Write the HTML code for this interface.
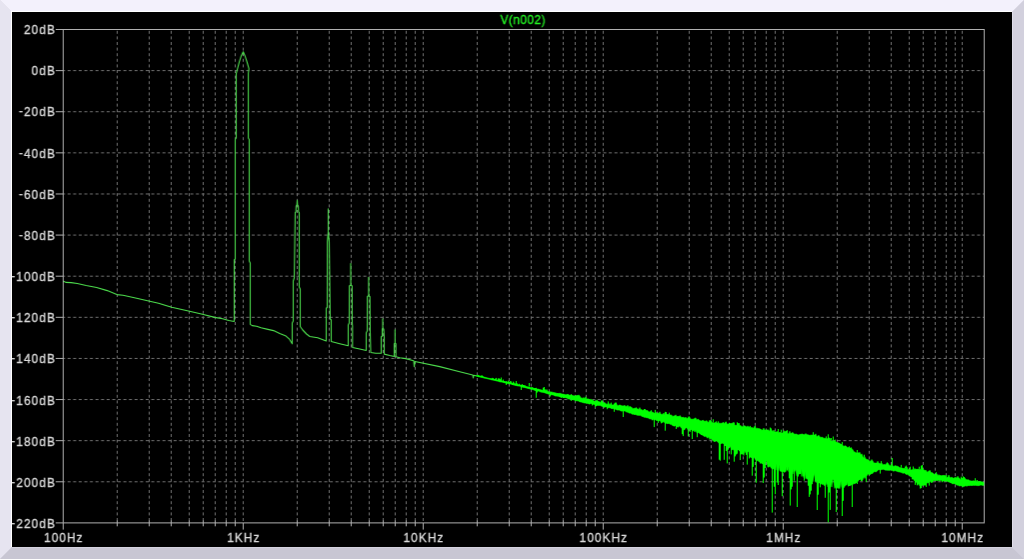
<!DOCTYPE html><html><head><meta charset="utf-8"><style>html,body{margin:0;padding:0;background:#000;width:1024px;height:559px;overflow:hidden}#w{position:absolute;left:0;top:0;width:1024px;height:559px}</style></head><body><div id="w"><svg width="1024" height="559" viewBox="0 0 1024 559" style="position:absolute;left:0;top:0;display:block;will-change:transform"><rect x="0" y="0" width="1024" height="559" fill="#DCDAE6"/><polygon points="0,0 1024,0 1012,12 12,12" fill="#F3F1FC"/><polygon points="0,0 12,12 12,547 0,559" fill="#E6E4F0"/><polygon points="1024,0 1024,559 1012,547 1012,12" fill="#D2D0DD"/><polygon points="0,559 12,547 1012,547 1024,559" fill="#C8C6D3"/><rect x="11" y="11" width="1001" height="1" fill="#FFFFFF"/><rect x="11" y="11" width="1" height="536" fill="#FFFFFF"/><rect x="1012" y="12" width="1" height="536" fill="#DEDCE8"/><rect x="12" y="547" width="1001" height="1" fill="#D4D2DE"/><defs><filter id="hb" x="12" y="12" width="1000" height="535" filterUnits="userSpaceOnUse" color-interpolation-filters="sRGB"><feConvolveMatrix order="3 1" kernelMatrix="0.3 0.75 0" divisor="1" preserveAlpha="true"/></filter></defs><g filter="url(#hb)"><rect x="12" y="12" width="1000" height="535" fill="#000000"/><path d="M64 70.62H984 M64 111.73H984 M64 152.85H984 M64 193.97H984 M64 235.08H984 M64 276.20H984 M64 317.32H984 M64 358.44H984 M64 399.55H984 M64 440.67H984 M64 481.79H984" stroke="#6C6C6C" stroke-width="1" stroke-dasharray="3 2.58" stroke-dashoffset="1.7" fill="none"/><path d="M117.5 30V523 M149.5 30V523 M171.5 30V523 M189.5 30V523 M203.5 30V523 M215.5 30V523 M226.5 30V523 M235.5 30V523 M243.5 30V523 M297.5 30V523 M329.5 30V523 M351.5 30V523 M369.5 30V523 M383.5 30V523 M395.5 30V523 M406.5 30V523 M415.5 30V523 M423.5 30V523 M477.5 30V523 M509.5 30V523 M531.5 30V523 M549.5 30V523 M563.5 30V523 M575.5 30V523 M586.5 30V523 M595.5 30V523 M603.5 30V523 M657.5 30V523 M689.5 30V523 M711.5 30V523 M729.5 30V523 M743.5 30V523 M755.5 30V523 M766.5 30V523 M775.5 30V523 M783.5 30V523 M837.5 30V523 M869.5 30V523 M891.5 30V523 M909.5 30V523 M923.5 30V523 M935.5 30V523 M946.5 30V523 M955.5 30V523 M962.5 30V523" stroke="#6C6C6C" stroke-width="1" stroke-dasharray="3 2.6" stroke-dashoffset="4.8" fill="none"/><path d="M56 29.50H63 M56 70.62H63 M56 111.73H63 M56 152.85H63 M56 193.97H63 M56 235.08H63 M56 276.20H63 M56 317.32H63 M56 358.44H63 M56 399.55H63 M56 440.67H63 M56 481.79H63 M56 522.90H63 M63.5 523V529.6 M117.5 520.3V526.3 M149.5 520.3V526.3 M171.5 520.3V526.3 M189.5 520.3V526.3 M203.5 520.3V526.3 M215.5 520.3V526.3 M226.5 520.3V526.3 M235.5 520.3V526.3 M243.5 523V529.6 M297.5 520.3V526.3 M329.5 520.3V526.3 M351.5 520.3V526.3 M369.5 520.3V526.3 M383.5 520.3V526.3 M395.5 520.3V526.3 M406.5 520.3V526.3 M415.5 520.3V526.3 M423.5 523V529.6 M477.5 520.3V526.3 M509.5 520.3V526.3 M531.5 520.3V526.3 M549.5 520.3V526.3 M563.5 520.3V526.3 M575.5 520.3V526.3 M586.5 520.3V526.3 M595.5 520.3V526.3 M603.5 523V529.6 M657.5 520.3V526.3 M689.5 520.3V526.3 M711.5 520.3V526.3 M729.5 520.3V526.3 M743.5 520.3V526.3 M755.5 520.3V526.3 M766.5 520.3V526.3 M775.5 520.3V526.3 M783.5 523V529.6 M837.5 520.3V526.3 M869.5 520.3V526.3 M891.5 520.3V526.3 M909.5 520.3V526.3 M923.5 520.3V526.3 M935.5 520.3V526.3 M946.5 520.3V526.3 M955.5 520.3V526.3 M962.5 523V529.6" stroke="#A8A8A8" stroke-width="1" fill="none"/><path d="M63.5 29V522.9M63 29.5H985M984.5 29V522.9M63 522.9H985" stroke="#A8A8A8" stroke-width="1" fill="none"/><g fill="#CFCFCF" stroke="#CFCFCF" stroke-width="0.35" font-family="Liberation Sans, sans-serif" font-size="13.4" letter-spacing="1.25"><text transform="translate(56.1,34.0) scale(0.88,1)" text-anchor="end">20dB</text><text transform="translate(56.1,75.0) scale(0.88,1)" text-anchor="end">0dB</text><text transform="translate(56.1,116.0) scale(0.88,1)" text-anchor="end"><tspan dy="-1.2">-</tspan><tspan dy="1.2">20dB</tspan></text><text transform="translate(56.1,158.0) scale(0.88,1)" text-anchor="end"><tspan dy="-1.2">-</tspan><tspan dy="1.2">40dB</tspan></text><text transform="translate(56.1,199.0) scale(0.88,1)" text-anchor="end"><tspan dy="-1.2">-</tspan><tspan dy="1.2">60dB</tspan></text><text transform="translate(56.1,240.0) scale(0.88,1)" text-anchor="end"><tspan dy="-1.2">-</tspan><tspan dy="1.2">80dB</tspan></text><text transform="translate(56.1,281.0) scale(0.88,1)" text-anchor="end"><tspan dy="-1.2">-</tspan><tspan dy="1.2">100dB</tspan></text><text transform="translate(56.1,322.0) scale(0.88,1)" text-anchor="end"><tspan dy="-1.2">-</tspan><tspan dy="1.2">120dB</tspan></text><text transform="translate(56.1,363.0) scale(0.88,1)" text-anchor="end"><tspan dy="-1.2">-</tspan><tspan dy="1.2">140dB</tspan></text><text transform="translate(56.1,405.0) scale(0.88,1)" text-anchor="end"><tspan dy="-1.2">-</tspan><tspan dy="1.2">160dB</tspan></text><text transform="translate(56.1,446.0) scale(0.88,1)" text-anchor="end"><tspan dy="-1.2">-</tspan><tspan dy="1.2">180dB</tspan></text><text transform="translate(56.1,487.0) scale(0.88,1)" text-anchor="end"><tspan dy="-1.2">-</tspan><tspan dy="1.2">200dB</tspan></text><text transform="translate(56.1,528.0) scale(0.88,1)" text-anchor="end"><tspan dy="-1.2">-</tspan><tspan dy="1.2">220dB</tspan></text><text transform="translate(64.05,542) scale(0.88,1)" text-anchor="middle">100Hz</text><text transform="translate(244.05,542) scale(0.88,1)" text-anchor="middle">1KHz</text><text transform="translate(424.05,542) scale(0.88,1)" text-anchor="middle">10KHz</text><text transform="translate(604.05,542) scale(0.88,1)" text-anchor="middle">100KHz</text><text transform="translate(784.05,542) scale(0.88,1)" text-anchor="middle">1MHz</text><text transform="translate(963.05,542) scale(0.88,1)" text-anchor="middle">10MHz</text></g><text transform="translate(523.3,24) scale(0.88,1)" text-anchor="middle" fill="#22E822" stroke="#22E822" stroke-width="0.35" font-family="Liberation Sans, sans-serif" font-size="13.4" letter-spacing="0.57">V(n002)</text><path d="M64.0 281.2 L66.0 282.4 L71.4 282.6 L77.6 283.5 L86.4 285.5 L96.9 287.5 L107.5 290.6 L117.1 294.6 L123.3 295.2 L134.7 297.7 L150.0 301.2 L158.8 303.3 L172.0 307.3 L188.7 311.0 L202.7 314.3 L215.0 317.4 L222.9 318.7 L229.1 320.5 L234.5 321.5 L234.5 260.0 L235.5 259.0 L235.5 139.5 L236.5 138.0 L236.5 73.6 L239.5 62.2 L241.6 55.7 L243.5 51.8 L245.2 55.7 L247.3 62.0 L249.2 68.6 L248.6 73.5 L248.6 138.0 L249.5 139.5 L249.5 261.0 L250.5 263.0 L250.5 324.4 L252.5 325.6 L256.9 326.3 L261.3 327.8 L268.2 329.4 L273.8 330.6 L280.0 333.5 L285.7 335.7 L289.4 338.8 L292.5 343.8 L292.5 323.0 L293.5 321.0 L293.5 281.0 L294.5 278.0 L295.5 212.5 L296.2 211.8 L296.4 206.0 L297.2 204.8 L297.5 200.4 L297.8 204.8 L298.6 206.0 L298.8 211.8 L299.5 212.5 L299.5 287.0 L300.5 289.0 L300.5 326.5 L303.0 330.0 L306.8 334.0 L310.0 336.5 L318.0 337.7 L326.5 341.0 L326.5 308.2 L327.5 307.5 L327.6 242.0 L328.5 232.0 L328.5 208.9 L328.5 232.0 L329.5 242.0 L330.5 319.0 L331.5 320.0 L331.5 341.5 L340.0 343.7 L348.5 345.8 L348.5 325.0 L349.5 323.0 L349.6 286.0 L351.0 285.0 L351.0 263.5 L351.1 285.0 L352.4 286.0 L352.5 323.0 L352.8 326.0 L352.8 347.5 L360.0 349.0 L366.5 350.5 L366.5 332.8 L367.5 331.0 L367.6 296.6 L368.9 295.5 L368.9 277.3 L369.0 295.5 L370.2 296.6 L370.5 333.0 L371.0 352.5 L376.0 353.2 L381.5 353.2 L381.5 337.0 L382.5 336.0 L382.5 329.0 L383.0 328.0 L383.0 318.7 L383.1 328.0 L384.0 329.0 L384.5 337.0 L384.5 354.1 L390.0 355.5 L394.5 356.5 L394.5 343.8 L395.3 343.0 L395.3 329.9 L395.4 343.0 L396.2 343.8 L396.2 356.8 L400.0 357.8 L406.0 358.6 L414.0 360.8 L414.5 366.6 L415.2 361.5 L440.0 366.6 L460.0 371.8 L473.0 375.0 L473.5 378.0 L474.0 375.2 L476.0 375.8" stroke="#48D048" stroke-width="1.1" fill="none" stroke-linejoin="round"/><path d="M476.0 375.4 L477.0 375.5 L478.0 375.7 L479.0 375.8 L480.0 375.8 L481.0 376.6 L482.0 375.3 L483.0 376.3 L484.0 377.0 L485.0 377.3 L486.0 377.4 L487.0 377.8 L488.0 378.0 L489.0 378.3 L490.0 378.4 L491.0 378.6 L492.0 378.8 L493.0 377.9 L494.0 379.3 L495.0 379.6 L496.0 379.7 L497.0 379.9 L498.0 380.2 L499.0 380.5 L500.0 379.7 L501.0 379.5 L502.0 380.9 L503.0 381.1 L504.0 381.6 L505.0 381.6 L506.0 382.0 L507.0 382.0 L508.0 382.3 L509.0 382.4 L510.0 382.8 L511.0 383.0 L512.0 383.1 L513.0 383.6 L514.0 382.5 L515.0 383.7 L516.0 383.9 L517.0 384.2 L518.0 384.7 L519.0 384.7 L520.0 384.8 L521.0 385.2 L522.0 385.3 L523.0 385.8 L524.0 386.1 L525.0 385.1 L526.0 386.6 L527.0 386.5 L528.0 386.9 L529.0 386.9 L530.0 387.5 L531.0 387.7 L532.0 387.4 L533.0 387.8 L534.0 388.2 L535.0 388.7 L536.0 388.5 L537.0 389.0 L538.0 389.1 L539.0 389.1 L540.0 389.8 L541.0 389.6 L542.0 390.3 L543.0 390.2 L544.0 389.9 L545.0 389.1 L546.0 391.1 L547.0 389.4 L548.0 391.4 L549.0 391.9 L550.0 391.7 L551.0 392.1 L552.0 391.9 L553.0 392.4 L554.0 392.5 L555.0 392.8 L556.0 392.9 L557.0 393.4 L558.0 393.5 L559.0 393.5 L560.0 393.2 L561.0 393.6 L562.0 394.0 L563.0 394.1 L564.0 394.3 L565.0 394.5 L566.0 394.9 L567.0 394.6 L568.0 394.3 L569.0 394.7 L570.0 395.6 L571.0 395.1 L572.0 395.3 L573.0 395.5 L574.0 396.0 L575.0 395.8 L576.0 396.2 L577.0 395.1 L578.0 396.1 L579.0 394.8 L580.0 396.0 L581.0 397.7 L582.0 398.2 L583.0 398.4 L584.0 397.5 L585.0 399.0 L586.0 396.7 L587.0 399.0 L588.0 399.2 L589.0 398.8 L590.0 400.0 L591.0 398.9 L592.0 400.2 L593.0 400.0 L594.0 401.1 L595.0 401.5 L596.0 401.4 L597.0 399.8 L598.0 401.2 L599.0 401.7 L600.0 401.8 L601.0 403.0 L602.0 402.5 L603.0 403.0 L604.0 402.7 L605.0 402.5 L606.0 403.8 L607.0 404.4 L608.0 403.9 L609.0 404.9 L610.0 403.5 L611.0 405.2 L612.0 405.2 L613.0 404.7 L614.0 405.3 L615.0 403.5 L616.0 405.4 L617.0 404.4 L618.0 405.9 L619.0 405.6 L620.0 404.8 L621.0 405.6 L622.0 405.8 L623.0 406.0 L624.0 405.9 L625.0 405.2 L626.0 406.8 L627.0 406.6 L628.0 405.2 L629.0 407.9 L630.0 406.1 L631.0 407.3 L632.0 407.2 L633.0 409.1 L634.0 408.3 L635.0 408.4 L636.0 408.1 L637.0 408.6 L638.0 409.0 L639.0 409.7 L640.0 407.6 L641.0 410.1 L642.0 409.4 L643.0 410.7 L644.0 410.1 L645.0 410.1 L646.0 410.4 L647.0 410.5 L648.0 410.6 L649.0 412.2 L650.0 411.8 L651.0 411.6 L652.0 412.4 L653.0 411.9 L654.0 413.2 L655.0 413.2 L656.0 412.1 L657.0 413.9 L658.0 412.8 L659.0 414.1 L660.0 411.8 L661.0 414.3 L662.0 414.4 L663.0 414.4 L664.0 413.1 L665.0 414.9 L666.0 414.3 L667.0 414.1 L668.0 414.7 L669.0 414.4 L670.0 414.9 L671.0 415.0 L672.0 415.2 L673.0 416.7 L674.0 415.9 L675.0 416.0 L676.0 414.8 L677.0 416.9 L678.0 416.0 L679.0 417.0 L680.0 415.6 L681.0 416.4 L682.0 417.8 L683.0 417.3 L684.0 417.3 L685.0 418.3 L686.0 417.1 L687.0 418.8 L688.0 418.4 L689.0 416.4 L690.0 417.3 L691.0 419.5 L692.0 418.9 L693.0 419.5 L694.0 418.9 L695.0 418.6 L696.0 417.8 L697.0 420.4 L698.0 419.1 L699.0 419.6 L700.0 420.6 L701.0 421.0 L702.0 421.0 L703.0 420.1 L704.0 420.7 L705.0 421.6 L706.0 421.2 L707.0 420.6 L708.0 422.4 L709.0 422.4 L710.0 420.1 L711.0 420.9 L712.0 422.6 L713.0 422.8 L714.0 423.2 L715.0 422.7 L716.0 422.4 L717.0 422.9 L718.0 423.2 L719.0 423.4 L720.0 422.9 L721.0 423.7 L722.0 423.0 L723.0 423.2 L724.0 423.4 L725.0 423.4 L726.0 421.8 L727.0 423.4 L728.0 424.5 L729.0 423.8 L730.0 423.8 L731.0 423.2 L732.0 423.8 L733.0 422.9 L734.0 424.5 L735.0 425.2 L736.0 425.2 L737.0 425.6 L738.0 423.7 L739.0 423.4 L740.0 425.9 L741.0 425.4 L742.0 426.7 L743.0 426.9 L744.0 425.6 L745.0 426.1 L746.0 426.2 L747.0 427.6 L748.0 425.8 L749.0 427.5 L750.0 426.7 L751.0 428.3 L752.0 427.1 L753.0 428.5 L754.0 427.9 L755.0 426.3 L756.0 429.5 L757.0 427.7 L758.0 429.0 L759.0 428.3 L760.0 429.1 L761.0 429.0 L762.0 430.5 L763.0 430.1 L764.0 428.1 L765.0 430.4 L766.0 429.8 L767.0 430.3 L768.0 429.7 L769.0 430.2 L770.0 431.5 L771.0 430.2 L772.0 430.3 L773.0 431.8 L774.0 430.1 L775.0 432.3 L776.0 431.7 L777.0 432.2 L778.0 431.2 L779.0 433.1 L780.0 432.1 L781.0 432.8 L782.0 433.2 L783.0 433.1 L784.0 430.5 L785.0 432.2 L786.0 431.1 L787.0 431.3 L788.0 433.8 L789.0 434.0 L790.0 431.2 L791.0 434.1 L792.0 432.9 L793.0 432.4 L794.0 433.6 L795.0 434.6 L796.0 433.9 L797.0 434.2 L798.0 434.9 L799.0 434.9 L800.0 434.5 L801.0 434.3 L802.0 434.2 L803.0 433.9 L804.0 435.0 L805.0 434.5 L806.0 433.5 L807.0 434.8 L808.0 434.7 L809.0 435.1 L810.0 435.5 L811.0 435.0 L812.0 435.2 L813.0 435.1 L814.0 435.1 L815.0 435.3 L816.0 433.8 L817.0 437.2 L818.0 436.0 L819.0 435.2 L820.0 436.9 L821.0 437.4 L822.0 437.3 L823.0 437.3 L824.0 438.4 L825.0 438.2 L826.0 438.4 L827.0 438.4 L828.0 439.0 L829.0 439.7 L830.0 438.0 L831.0 440.9 L832.0 440.6 L833.0 441.6 L834.0 440.9 L835.0 441.1 L836.0 441.8 L837.0 442.5 L838.0 442.6 L839.0 443.0 L840.0 443.2 L841.0 444.3 L842.0 444.6 L843.0 445.3 L844.0 446.4 L845.0 446.0 L846.0 445.8 L847.0 446.8 L848.0 447.9 L849.0 447.3 L850.0 448.0 L851.0 448.3 L852.0 448.5 L853.0 449.7 L854.0 451.6 L855.0 452.2 L856.0 452.4 L857.0 453.3 L858.0 452.6 L859.0 453.2 L860.0 452.2 L861.0 455.3 L862.0 453.8 L863.0 456.5 L864.0 457.9 L865.0 456.8 L866.0 459.0 L867.0 459.4 L868.0 459.7 L869.0 460.1 L870.0 461.8 L871.0 460.9 L872.0 459.5 L873.0 461.0 L874.0 462.9 L875.0 463.1 L876.0 463.1 L877.0 463.3 L878.0 461.2 L879.0 463.4 L880.0 463.5 L881.0 463.9 L882.0 463.1 L883.0 465.0 L884.0 464.6 L885.0 464.6 L886.0 465.0 L887.0 463.1 L888.0 463.0 L889.0 464.5 L890.0 465.7 L891.0 465.9 L892.0 464.0 L893.0 465.9 L894.0 466.8 L895.0 465.6 L896.0 465.9 L897.0 466.2 L898.0 466.2 L899.0 467.0 L900.0 467.7 L901.0 467.7 L902.0 468.2 L903.0 468.0 L904.0 468.9 L905.0 468.1 L906.0 469.2 L907.0 468.7 L908.0 469.4 L909.0 469.8 L910.0 469.1 L911.0 470.0 L912.0 469.9 L913.0 469.4 L914.0 469.7 L915.0 468.4 L916.0 469.5 L917.0 469.3 L918.0 469.3 L919.0 469.3 L920.0 469.4 L921.0 469.2 L922.0 469.8 L923.0 468.9 L924.0 469.5 L925.0 470.8 L926.0 470.1 L927.0 471.5 L928.0 472.5 L929.0 470.9 L930.0 470.8 L931.0 472.8 L932.0 472.5 L933.0 473.0 L934.0 474.1 L935.0 474.7 L936.0 474.0 L937.0 473.6 L938.0 475.9 L939.0 474.6 L940.0 475.8 L941.0 475.2 L942.0 476.2 L943.0 475.0 L944.0 475.9 L945.0 475.0 L946.0 477.0 L947.0 477.5 L948.0 477.6 L949.0 475.0 L950.0 477.5 L951.0 478.0 L952.0 476.9 L953.0 478.1 L954.0 478.5 L955.0 477.3 L956.0 477.8 L957.0 477.9 L958.0 476.2 L959.0 478.1 L960.0 478.4 L961.0 479.9 L962.0 478.5 L963.0 478.6 L964.0 477.5 L965.0 477.7 L966.0 479.5 L967.0 479.8 L968.0 479.9 L969.0 479.7 L970.0 480.7 L971.0 481.0 L972.0 481.0 L973.0 481.3 L974.0 480.5 L975.0 481.6 L976.0 480.6 L977.0 481.8 L978.0 481.9 L979.0 481.4 L980.0 481.6 L981.0 481.3 L982.0 482.2 L983.0 481.8 L984.0 482.4 L984.0 485.2 L983.0 485.6 L982.0 485.0 L981.0 485.0 L980.0 485.2 L979.0 485.7 L978.0 485.6 L977.0 485.6 L976.0 485.3 L975.0 485.3 L974.0 485.5 L973.0 485.1 L972.0 485.9 L971.0 485.0 L970.0 485.8 L969.0 485.4 L968.0 485.4 L967.0 486.4 L966.0 485.4 L965.0 486.1 L964.0 486.6 L963.0 486.8 L962.0 485.9 L961.0 485.4 L960.0 486.1 L959.0 485.8 L958.0 484.8 L957.0 485.3 L956.0 484.3 L955.0 483.4 L954.0 483.7 L953.0 483.8 L952.0 483.5 L951.0 482.4 L950.0 482.4 L949.0 481.5 L948.0 481.9 L947.0 480.7 L946.0 481.3 L945.0 481.0 L944.0 480.9 L943.0 480.8 L942.0 480.5 L941.0 480.0 L940.0 481.2 L939.0 480.3 L938.0 480.2 L937.0 480.9 L936.0 479.9 L935.0 480.8 L934.0 480.2 L933.0 481.7 L932.0 481.8 L931.0 481.1 L930.0 481.6 L929.0 483.3 L928.0 482.1 L927.0 483.6 L926.0 483.8 L925.0 485.1 L924.0 485.2 L923.0 485.2 L922.0 485.5 L921.0 485.9 L920.0 486.0 L919.0 483.6 L918.0 484.5 L917.0 482.8 L916.0 480.7 L915.0 481.1 L914.0 479.7 L913.0 477.6 L912.0 476.5 L911.0 477.0 L910.0 475.1 L909.0 475.6 L908.0 474.0 L907.0 474.4 L906.0 474.2 L905.0 472.9 L904.0 472.8 L903.0 473.5 L902.0 472.2 L901.0 472.4 L900.0 471.7 L899.0 472.1 L898.0 471.4 L897.0 471.3 L896.0 470.8 L895.0 470.5 L894.0 471.3 L893.0 470.8 L892.0 470.1 L891.0 469.7 L890.0 470.4 L889.0 470.2 L888.0 470.2 L887.0 470.2 L886.0 470.1 L885.0 470.1 L884.0 468.9 L883.0 469.6 L882.0 469.3 L881.0 470.0 L880.0 469.5 L879.0 469.7 L878.0 470.0 L877.0 471.5 L876.0 471.9 L875.0 471.6 L874.0 471.8 L873.0 473.4 L872.0 473.5 L871.0 473.9 L870.0 475.0 L869.0 474.5 L868.0 473.7 L867.0 476.0 L866.0 476.1 L865.0 478.5 L864.0 475.2 L863.0 479.9 L862.0 481.2 L861.0 479.4 L860.0 479.1 L859.0 479.5 L858.0 480.2 L857.0 482.0 L856.0 483.1 L855.0 484.0 L854.0 483.3 L853.0 484.7 L852.0 484.6 L851.0 485.2 L850.0 486.0 L849.0 484.8 L848.0 485.1 L847.0 481.5 L846.0 485.3 L845.0 486.3 L844.0 487.9 L843.0 488.5 L842.0 487.6 L841.0 479.8 L840.0 488.7 L839.0 487.6 L838.0 488.5 L837.0 486.6 L836.0 484.8 L835.0 488.4 L834.0 480.7 L833.0 478.5 L832.0 487.1 L831.0 482.0 L830.0 479.5 L829.0 482.4 L828.0 486.9 L827.0 480.3 L826.0 485.3 L825.0 486.1 L824.0 484.6 L823.0 484.0 L822.0 484.4 L821.0 483.0 L820.0 483.0 L819.0 482.8 L818.0 481.6 L817.0 482.6 L816.0 479.1 L815.0 472.5 L814.0 476.9 L813.0 481.7 L812.0 479.7 L811.0 481.1 L810.0 480.7 L809.0 479.0 L808.0 478.6 L807.0 479.2 L806.0 470.2 L805.0 478.6 L804.0 477.6 L803.0 470.3 L802.0 476.5 L801.0 468.0 L800.0 471.9 L799.0 471.7 L798.0 474.2 L797.0 475.6 L796.0 469.0 L795.0 471.5 L794.0 474.0 L793.0 468.2 L792.0 471.6 L791.0 473.3 L790.0 472.7 L789.0 471.9 L788.0 465.7 L787.0 466.0 L786.0 471.8 L785.0 471.7 L784.0 472.6 L783.0 470.7 L782.0 471.5 L781.0 471.3 L780.0 470.7 L779.0 463.9 L778.0 464.8 L777.0 463.3 L776.0 470.1 L775.0 465.5 L774.0 468.6 L773.0 468.8 L772.0 468.4 L771.0 467.6 L770.0 466.1 L769.0 466.8 L768.0 467.3 L767.0 460.6 L766.0 462.1 L765.0 464.4 L764.0 464.6 L763.0 463.9 L762.0 463.4 L761.0 462.5 L760.0 461.8 L759.0 461.7 L758.0 460.3 L757.0 460.6 L756.0 460.4 L755.0 455.9 L754.0 458.7 L753.0 458.3 L752.0 458.2 L751.0 456.7 L750.0 457.3 L749.0 452.2 L748.0 450.8 L747.0 453.4 L746.0 453.0 L745.0 450.0 L744.0 455.5 L743.0 453.4 L742.0 454.4 L741.0 448.8 L740.0 450.7 L739.0 448.8 L738.0 450.2 L737.0 449.6 L736.0 447.3 L735.0 451.4 L734.0 450.1 L733.0 449.2 L732.0 449.9 L731.0 447.7 L730.0 446.1 L729.0 446.8 L728.0 443.7 L727.0 442.7 L726.0 446.0 L725.0 444.6 L724.0 444.1 L723.0 443.0 L722.0 443.2 L721.0 443.7 L720.0 440.2 L719.0 443.2 L718.0 441.2 L717.0 440.2 L716.0 441.1 L715.0 441.8 L714.0 441.2 L713.0 440.3 L712.0 439.4 L711.0 437.9 L710.0 439.6 L709.0 436.2 L708.0 438.1 L707.0 437.5 L706.0 435.8 L705.0 436.8 L704.0 435.9 L703.0 435.1 L702.0 434.4 L701.0 433.9 L700.0 433.8 L699.0 432.4 L698.0 432.5 L697.0 432.8 L696.0 429.7 L695.0 432.0 L694.0 429.8 L693.0 430.7 L692.0 429.2 L691.0 430.0 L690.0 428.2 L689.0 429.4 L688.0 429.8 L687.0 427.4 L686.0 427.7 L685.0 429.4 L684.0 428.1 L683.0 428.5 L682.0 428.5 L681.0 427.3 L680.0 425.5 L679.0 426.8 L678.0 427.3 L677.0 426.4 L676.0 425.0 L675.0 426.2 L674.0 425.9 L673.0 425.4 L672.0 425.0 L671.0 423.4 L670.0 424.0 L669.0 423.1 L668.0 423.9 L667.0 423.3 L666.0 423.2 L665.0 423.0 L664.0 421.2 L663.0 422.4 L662.0 422.5 L661.0 421.8 L660.0 420.2 L659.0 420.9 L658.0 419.8 L657.0 421.0 L656.0 419.5 L655.0 419.5 L654.0 420.3 L653.0 418.3 L652.0 419.3 L651.0 418.6 L650.0 419.1 L649.0 418.2 L648.0 417.7 L647.0 417.8 L646.0 417.4 L645.0 417.1 L644.0 417.3 L643.0 416.2 L642.0 416.5 L641.0 415.2 L640.0 415.2 L639.0 415.4 L638.0 414.7 L637.0 415.4 L636.0 413.9 L635.0 415.0 L634.0 414.0 L633.0 414.2 L632.0 414.1 L631.0 412.7 L630.0 413.3 L629.0 412.8 L628.0 412.0 L627.0 412.2 L626.0 411.3 L625.0 411.1 L624.0 410.7 L623.0 411.2 L622.0 410.7 L621.0 411.2 L620.0 410.0 L619.0 410.0 L618.0 410.0 L617.0 410.0 L616.0 409.1 L615.0 409.2 L614.0 408.8 L613.0 408.3 L612.0 408.9 L611.0 407.9 L610.0 407.7 L609.0 407.6 L608.0 407.9 L607.0 406.8 L606.0 406.9 L605.0 406.8 L604.0 406.7 L603.0 406.4 L602.0 406.3 L601.0 405.5 L600.0 405.3 L599.0 405.6 L598.0 405.2 L597.0 405.5 L596.0 405.4 L595.0 404.5 L594.0 404.3 L593.0 404.2 L592.0 403.5 L591.0 403.5 L590.0 404.0 L589.0 403.6 L588.0 403.5 L587.0 403.3 L586.0 402.9 L585.0 403.0 L584.0 402.8 L583.0 402.5 L582.0 402.2 L581.0 401.7 L580.0 402.0 L579.0 400.9 L578.0 400.8 L577.0 400.8 L576.0 400.7 L575.0 400.2 L574.0 399.7 L573.0 399.9 L572.0 399.1 L571.0 399.1 L570.0 398.7 L569.0 399.2 L568.0 398.6 L567.0 397.9 L566.0 397.7 L565.0 397.5 L564.0 397.7 L563.0 397.4 L562.0 396.8 L561.0 396.9 L560.0 396.9 L559.0 396.2 L558.0 396.3 L557.0 396.0 L556.0 396.1 L555.0 395.8 L554.0 395.2 L553.0 394.7 L552.0 394.9 L551.0 394.6 L550.0 394.5 L549.0 394.2 L548.0 393.8 L547.0 393.4 L546.0 393.2 L545.0 392.7 L544.0 392.5 L543.0 392.3 L542.0 392.2 L541.0 392.0 L540.0 391.6 L539.0 391.1 L538.0 390.9 L537.0 390.6 L536.0 390.7 L535.0 390.4 L534.0 389.8 L533.0 389.5 L532.0 389.6 L531.0 389.2 L530.0 388.8 L529.0 388.5 L528.0 388.5 L527.0 388.0 L526.0 387.9 L525.0 387.4 L524.0 387.4 L523.0 387.2 L522.0 386.9 L521.0 386.6 L520.0 386.1 L519.0 386.1 L518.0 385.9 L517.0 385.7 L516.0 385.4 L515.0 385.2 L514.0 385.0 L513.0 384.7 L512.0 384.3 L511.0 384.1 L510.0 383.9 L509.0 383.8 L508.0 383.6 L507.0 383.3 L506.0 383.1 L505.0 382.8 L504.0 382.5 L503.0 382.3 L502.0 382.0 L501.0 382.0 L500.0 381.8 L499.0 381.5 L498.0 381.1 L497.0 381.1 L496.0 380.6 L495.0 380.5 L494.0 380.3 L493.0 380.0 L492.0 379.9 L491.0 379.6 L490.0 379.3 L489.0 379.1 L488.0 378.8 L487.0 378.6 L486.0 378.3 L485.0 378.2 L484.0 377.9 L483.0 377.6 L482.0 377.5 L481.0 377.2 L480.0 376.9 L479.0 376.7 L478.0 376.6 L477.0 376.3 L476.0 376.0Z" fill="#00FF00" stroke="#00FF00" stroke-width="0.6"/><path d="M495.5 380.2V378.6 M496.5 380.5V377.9 M498.5 380.9V378.4 M499.5 381.1V378.8 M501.5 381.6V379.1 M503.5 382.1V379.5 M504.5 382.3V381.0 M505.5 382.5V381.9 M506.5 382.7V383.4 M508.5 383.2V380.7 M509.5 383.4V381.8 M510.5 383.7V381.1 M511.5 383.9V381.4 M512.5 384.1V384.8 M513.5 384.3V383.1 M515.5 384.8V385.2 M517.5 385.2V383.4 M519.5 385.7V383.8 M522.5 386.4V384.1 M523.5 386.7V385.0 M529.5 388.2V387.0 M532.5 389.0V387.4 M534.5 389.5V388.4 M535.5 389.8V388.3 M536.5 390.1V387.8 M537.5 390.3V392.5 M544.5 392.1V391.8 M545.5 392.4V392.3 M546.5 392.6V391.8 M549.5 393.4V392.5 M550.5 393.7V396.0 M551.5 393.9V392.2 M553.5 394.3V393.9 M555.5 394.8V393.1 M556.5 395.0V394.4 M557.5 395.2V393.4 M558.5 395.4V393.9 M559.5 395.7V394.2 M560.5 395.9V394.1 M561.5 396.1V397.9 M563.5 396.6V396.9 M564.5 396.8V397.6 M565.5 397.0V396.8 M567.5 397.4V396.2 M568.5 397.7V396.2 M569.5 397.9V397.0 M570.5 398.1V396.5 M571.5 398.3V400.9 M572.5 398.5V398.6 M573.5 398.8V397.6 M575.5 399.2V401.1 M576.5 399.4V398.0 M578.5 399.9V398.5 M579.5 400.1V399.7 M581.5 400.5V399.4 M584.5 401.2V400.4 M585.5 401.5V402.7 M589.5 402.4V404.2 M592.5 403.1V405.5 M595.5 403.7V407.2 M596.5 404.0V406.2 M597.5 404.2V404.1 M599.5 404.7V404.1 M603.5 405.6V405.2 M604.5 405.8V407.7 M605.5 406.0V405.3 M606.5 406.3V405.4 M607.5 406.5V409.2 M609.5 406.9V406.5 M610.5 407.2V406.0 M611.5 407.4V407.9 M612.5 407.6V406.0 M614.5 408.0V411.8 M617.5 408.6V408.4 M619.5 409.0V407.7 M620.5 409.2V409.7 M623.5 409.9V417.0 M624.5 410.2V411.0 M626.5 410.7V410.5 M627.5 410.9V410.8 M630.5 411.7V410.8 M631.5 411.9V412.2 M632.5 412.2V413.9 M635.5 412.9V413.6 M638.5 413.7V415.3 M640.5 414.2V414.3 M643.5 414.9V414.4 M649.5 416.5V416.1 M650.5 416.7V418.5 M651.5 417.0V416.8 M652.5 417.2V420.3 M654.5 417.8V427.1 M656.5 418.3V419.3 M658.5 418.8V422.9 M659.5 419.0V419.5 M661.5 419.6V423.4 M662.5 419.8V421.8 M663.5 420.1V420.5 M665.5 420.6V430.7 M666.5 420.8V422.3 M667.5 421.1V421.3 M669.5 421.6V421.8 M670.5 421.9V424.5 M674.5 422.9V423.2 M676.5 423.4V429.0 M677.5 423.6V424.3 M678.5 423.9V424.5 M680.5 424.4V426.1 M681.5 424.7V426.7 M682.5 424.9V434.2 M683.5 425.2V436.1 M684.5 425.4V430.1 M685.5 425.7V426.5 M688.5 426.5V436.4 M690.5 427.0V431.8 M692.5 427.5V439.0 M693.5 427.8V430.4 M695.5 428.3V430.4 M697.5 428.8V437.2 M698.5 429.1V430.7 M699.5 429.3V431.0 M701.5 430.1V435.0 M702.5 430.5V435.2 M703.5 431.0V434.4 M704.5 431.5V433.5 M706.5 432.4V435.1 M707.5 432.9V436.0 M708.5 433.4V435.8 M710.5 434.3V437.2 M712.5 435.0V438.6 M714.5 435.6V441.3 M717.5 436.7V441.7 M719.5 437.3V459.7 M720.5 437.7V460.7 M721.5 438.0V442.3 M722.5 438.4V442.2 M724.5 439.1V459.8 M725.5 439.5V445.8 M726.5 439.9V451.0 M727.5 440.2V459.8 M728.5 440.6V449.7 M729.5 441.0V446.6 M731.5 441.7V454.4 M732.5 442.1V448.5 M733.5 442.5V447.6 M734.5 442.9V461.7 M735.5 443.2V456.4 M736.5 443.6V454.5 M737.5 444.0V453.7 M738.5 444.4V450.0 M739.5 444.8V451.2 M740.5 445.1V460.1 M741.5 445.5V454.1 M746.5 447.2V454.8 M747.5 447.5V464.6 M749.5 448.2V458.5 M752.5 449.4V475.7 M753.5 449.8V466.8 M754.5 450.2V457.2 M758.5 451.8V459.0 M759.5 452.2V460.3 M760.5 452.6V463.6 M761.5 453.1V462.9 M763.5 454.0V483.0 M764.5 454.4V477.5 M765.5 454.9V468.0 M767.5 455.8V464.0 M770.5 457.1V465.7 M773.5 457.9V468.2 M774.5 458.2V486.7 M775.5 458.5V494.2 M777.5 459.0V482.4 M778.5 459.3V485.0 M780.5 459.9V469.2 M782.5 460.2V496.2 M787.5 461.0V470.5 M789.5 461.4V478.3 M791.5 461.8V489.4 M792.5 462.0V486.7 M794.5 462.4V480.7 M797.5 463.1V474.4 M798.5 463.3V476.5 M799.5 463.5V474.3 M800.5 463.7V474.0 M803.5 464.7V476.3 M804.5 465.0V480.7 M806.5 465.6V478.4 M808.5 466.3V485.7 M809.5 466.6V496.9 M810.5 466.9V494.4 M811.5 467.2V490.7 M812.5 467.5V484.2 M815.5 468.4V481.7 M816.5 468.7V481.0 M817.5 469.0V482.3 M818.5 469.3V494.7 M819.5 469.6V481.4 M820.5 469.9V487.3 M821.5 470.3V482.5 M822.5 470.6V482.2 M825.5 471.6V497.8 M827.5 472.3V484.2 M828.5 472.6V489.1 M829.5 472.9V492.5 M830.5 473.2V509.9 M835.5 474.6V487.3 M836.5 474.8V486.2 M839.5 475.6V487.5 M843.5 475.5V500.8 M846.5 475.1V485.2 M848.5 474.8V486.4 M849.5 474.6V485.9 M851.5 474.5V482.7 M852.5 474.4V489.6 M857.5 474.1V484.0 M858.5 474.1V481.4 M859.5 474.0V480.1 M861.5 473.6V481.0 M863.5 473.1V477.6 M864.5 472.8V477.2 M866.5 472.2V481.9 M869.5 471.3V473.9 M871.5 470.7V473.2 M872.5 470.4V472.7 M876.5 469.1V469.8 M877.5 468.8V470.7 M878.5 468.5V468.3 M879.5 468.2V468.2 M880.5 467.9V473.6 M887.5 468.5V469.6 M889.5 468.6V468.8 M891.5 468.9V469.4 M892.5 469.1V468.3 M894.5 469.5V468.4 M896.5 469.9V468.7 M898.5 470.3V470.5 M899.5 470.5V470.4 M900.5 470.7V470.1 M901.5 471.0V470.0 M903.5 471.6V470.6 M905.5 472.2V471.3 M906.5 472.5V471.8 M907.5 472.9V473.3 M908.5 473.2V473.7 M909.5 473.5V473.8 M910.5 473.8V473.0 M911.5 474.5V474.1 M912.5 475.3V479.3 M913.5 476.0V479.1 M915.5 477.5V484.9 M917.5 479.0V485.4 M918.5 479.7V482.0 M920.5 481.2V488.6 M921.5 481.1V488.1 M922.5 481.0V483.6 M923.5 480.8V482.9 M924.5 480.7V482.8 M925.5 480.5V485.4 M926.5 480.4V486.9 M929.5 480.0V485.6 M931.5 479.7V482.8 M932.5 479.5V482.5 M935.5 479.1V479.0 M939.5 479.3V479.8 M940.5 479.3V479.5 M942.5 479.4V482.2 M944.5 479.5V478.2 M945.5 479.5V481.4 M946.5 479.8V478.4 M947.5 480.1V478.8 M949.5 480.7V480.8 M950.5 480.9V481.9 M951.5 481.2V480.3 M953.5 481.8V482.9 M956.5 482.7V482.5 M957.5 483.1V483.4 M501.5 381.0V377.5 M506.5 381.0V385.0 M516.5 384.0V381.0 M521.5 385.0V390.0 M529.5 386.5V383.0 M536.5 388.5V397.8 M544.5 390.5V387.0 M550.5 392.0V396.5 M478.5 376.7V374.9 M493.5 379.9V378.1 M499.5 381.2V378.5 M501.5 381.6V379.2 M503.5 382.1V380.3 M513.5 384.3V381.6 M543.5 390.9V387.7 M571.5 395.9V394.1 M601.5 402.9V400.6 M602.5 403.2V400.4 M608.5 404.8V401.4 M611.5 405.4V402.6 M614.5 405.6V403.8 M615.5 405.6V402.6 M616.5 405.7V402.6 M636.5 409.0V407.4 M644.5 410.6V409.0 M645.5 410.8V409.2 M651.5 412.1V410.2 M655.5 412.9V409.9 M665.5 414.8V411.8 M666.5 414.9V412.1 M669.5 415.4V412.7 M711.5 422.2V420.5 M713.5 422.6V419.2 M716.5 423.1V421.3 M718.5 423.5V421.3 M723.5 424.1V422.1 M726.5 424.3V421.8 M729.5 424.4V422.9 M733.5 424.8V422.3 M734.5 424.9V422.5 M737.5 425.2V422.2 M739.5 425.4V423.2 M750.5 427.5V425.9 M755.5 428.5V425.6 M770.5 431.0V427.5 M771.5 431.1V428.4 M778.5 432.2V429.0 M781.5 432.6V429.7 M787.5 433.2V430.2 M813.5 435.6V432.2 M826.5 438.7V436.4 M829.5 439.5V437.7 M831.5 440.2V438.0 M835.5 441.9V439.6 M842.5 444.9V442.1 M849.5 448.2V446.3 M851.5 449.3V447.4 M857.5 452.8V450.0 M864.5 457.1V454.7 M881.5 464.2V461.1 M887.5 465.1V462.4 M901.5 467.7V464.9 M905.5 468.6V466.6 M906.5 468.8V465.6 M907.5 469.0V467.3 M910.5 469.6V466.7 M913.5 469.4V466.5 M919.5 468.9V466.7 M921.5 469.2V465.7 M930.5 472.6V470.5 M936.5 474.8V472.2 M946.5 477.1V475.0 M961.5 479.1V476.7 M963.5 479.5V476.3 M964.5 479.7V477.0 M975.5 481.5V478.2 M977.5 481.7V480.0 M727.5 442.5V463.4 M756.5 456.0V482.7 M772.5 464.4V512.6 M790.5 469.0V505.6 M797.5 470.8V507.0 M828.5 482.3V522.3 M842.5 484.2V516.0 M852.5 480.3V507.0 M817.5 478.4V510.0 M836.5 484.2V512.0 M828.5 440.3V434.3 M833.5 442.1V436.5 M892.5 467.1V458.0 M922.5 470.6V465.0" stroke="#00FF00" stroke-width="1" fill="none"/></g></svg></div></body></html>
